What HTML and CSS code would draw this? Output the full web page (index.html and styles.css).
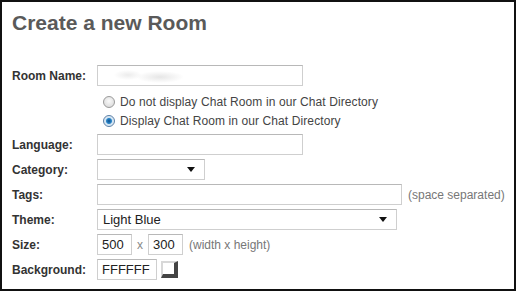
FILE: index.html
```html
<!DOCTYPE html>
<html lang="en">
<head>
    <meta charset="UTF-8">
    <title>Create a new Room</title>
    <link rel="stylesheet" href="styles.css">
</head>
<body>
    <div class="panel">
        <h1>Create a new Room</h1>

        <form class="room-form">
            <div class="row">
                <label>Room Name:</label>
                <input type="text" class="field wide blurred">
            </div>
            <div class="radio-row">
                <input type="radio" name="listing" id="hide">
                <label for="hide">Do not display Chat Room in our Chat Directory</label>
            </div>
            <div class="radio-row">
                <input type="radio" name="listing" id="show" checked>
                <label for="show">Display Chat Room in our Chat Directory</label>
            </div>
            <div class="row">
                <label>Language:</label>
                <input type="text" class="field wide">
            </div>
            <div class="row">
                <label>Category:</label>
                <div class="select short"><select><option></option></select></div>
            </div>
            <div class="row">
                <label>Tags:</label>
                <input type="text" class="field tags">
                <span class="hint">(space separated)</span>
            </div>
            <div class="row">
                <label>Theme:</label>
                <div class="select long"><select><option>Light Blue</option></select></div>
            </div>
            <div class="row">
                <label>Size:</label>
                <input type="text" class="field tiny" value="500">
                <span class="times">x</span>
                <input type="text" class="field tiny" value="300">
                <span class="hint">(width x height)</span>
            </div>
            <div class="row">
                <label>Background:</label>
                <input type="text" class="field color" value="FFFFFF">
                <span class="swatch"></span>
            </div>
        </form>
    </div>
</body>
</html>
```

FILE: styles.css
```css
* {
    box-sizing: border-box;
}

body {
    margin: 0;
    font-family: "Liberation Sans", Arial, sans-serif;
    background-color: white;
}

.panel {
    width: 516px;
    height: 291px;
    border: 2px solid #111;
    padding: 9px 0 0 10px;
}

h1 {
    margin: 0 0 30px 0;
    font-size: 21px;
    line-height: 24px;
    color: #5a5a5a;
}

.row {
    display: flex;
    align-items: center;
    height: 21px;
    margin-bottom: 4px;
}

.row > label {
    width: 85px;
    font-size: 12px;
    font-weight: bold;
    color: #333;
}

.field {
    height: 21px;
    border: 1px solid #cfcfcf;
    border-top-color: #b8b8b8;
    padding: 0 4px;
    font-family: "Liberation Sans", Arial, sans-serif;
    font-size: 13px;
    color: #222;
    background-color: white;
}

.wide {
    width: 206px;
}

.blurred {
    background: radial-gradient(ellipse 14px 5px at 30px 9px, #ececec, transparent),
                radial-gradient(ellipse 24px 6px at 62px 11px, #e6e6e6, transparent),
                white;
}

.tags {
    width: 305px;
}

.tiny {
    width: 35px;
}

.color {
    width: 60px;
}

.hint {
    margin-left: 6px;
    font-size: 12px;
    color: #777;
}

.times {
    margin: 0 5px;
    font-size: 12px;
    color: #888;
}

.swatch {
    width: 17px;
    height: 17px;
    margin-left: 4px;
    border-style: solid;
    border-width: 2px 4px 4px 2px;
    border-color: #d8d8d8 #444 #444 #d8d8d8;
    background-color: white;
}

.select {
    position: relative;
    height: 21px;
}

.select select {
    appearance: none;
    width: 100%;
    height: 21px;
    border: 1px solid #cfcfcf;
    border-top-color: #b8b8b8;
    padding: 0 5px;
    font-family: "Liberation Sans", Arial, sans-serif;
    font-size: 13px;
    color: #222;
    background-color: white;
}

.select::after {
    content: "";
    position: absolute;
    right: 10px;
    top: 8px;
    border-left: 4px solid transparent;
    border-right: 4px solid transparent;
    border-top: 5px solid #111;
}

.short {
    width: 108px;
}

.long {
    width: 300px;
}

.radio-row {
    display: flex;
    align-items: center;
    height: 19px;
    padding-left: 91px;
    font-size: 12px;
    letter-spacing: 0.1px;
    color: #444;
}

.radio-row:nth-child(2) {
    margin-top: 6px;
}

.radio-row:nth-child(3) {
    margin-bottom: 4px;
}

.radio-row input {
    appearance: none;
    width: 12px;
    height: 12px;
    margin: 0 5px 0 0;
    border: 1px solid #9a9a9a;
    border-radius: 50%;
    background: radial-gradient(circle at 50% 40%, #fafafa, #d4d4d4);
}

.radio-row input:checked {
    border-color: #5b7fa6;
    background: radial-gradient(circle, #0d4f8f 0, #2b86c8 2.5px, #cfe3f3 3.5px, #e8f0f7 6px);
}
```
